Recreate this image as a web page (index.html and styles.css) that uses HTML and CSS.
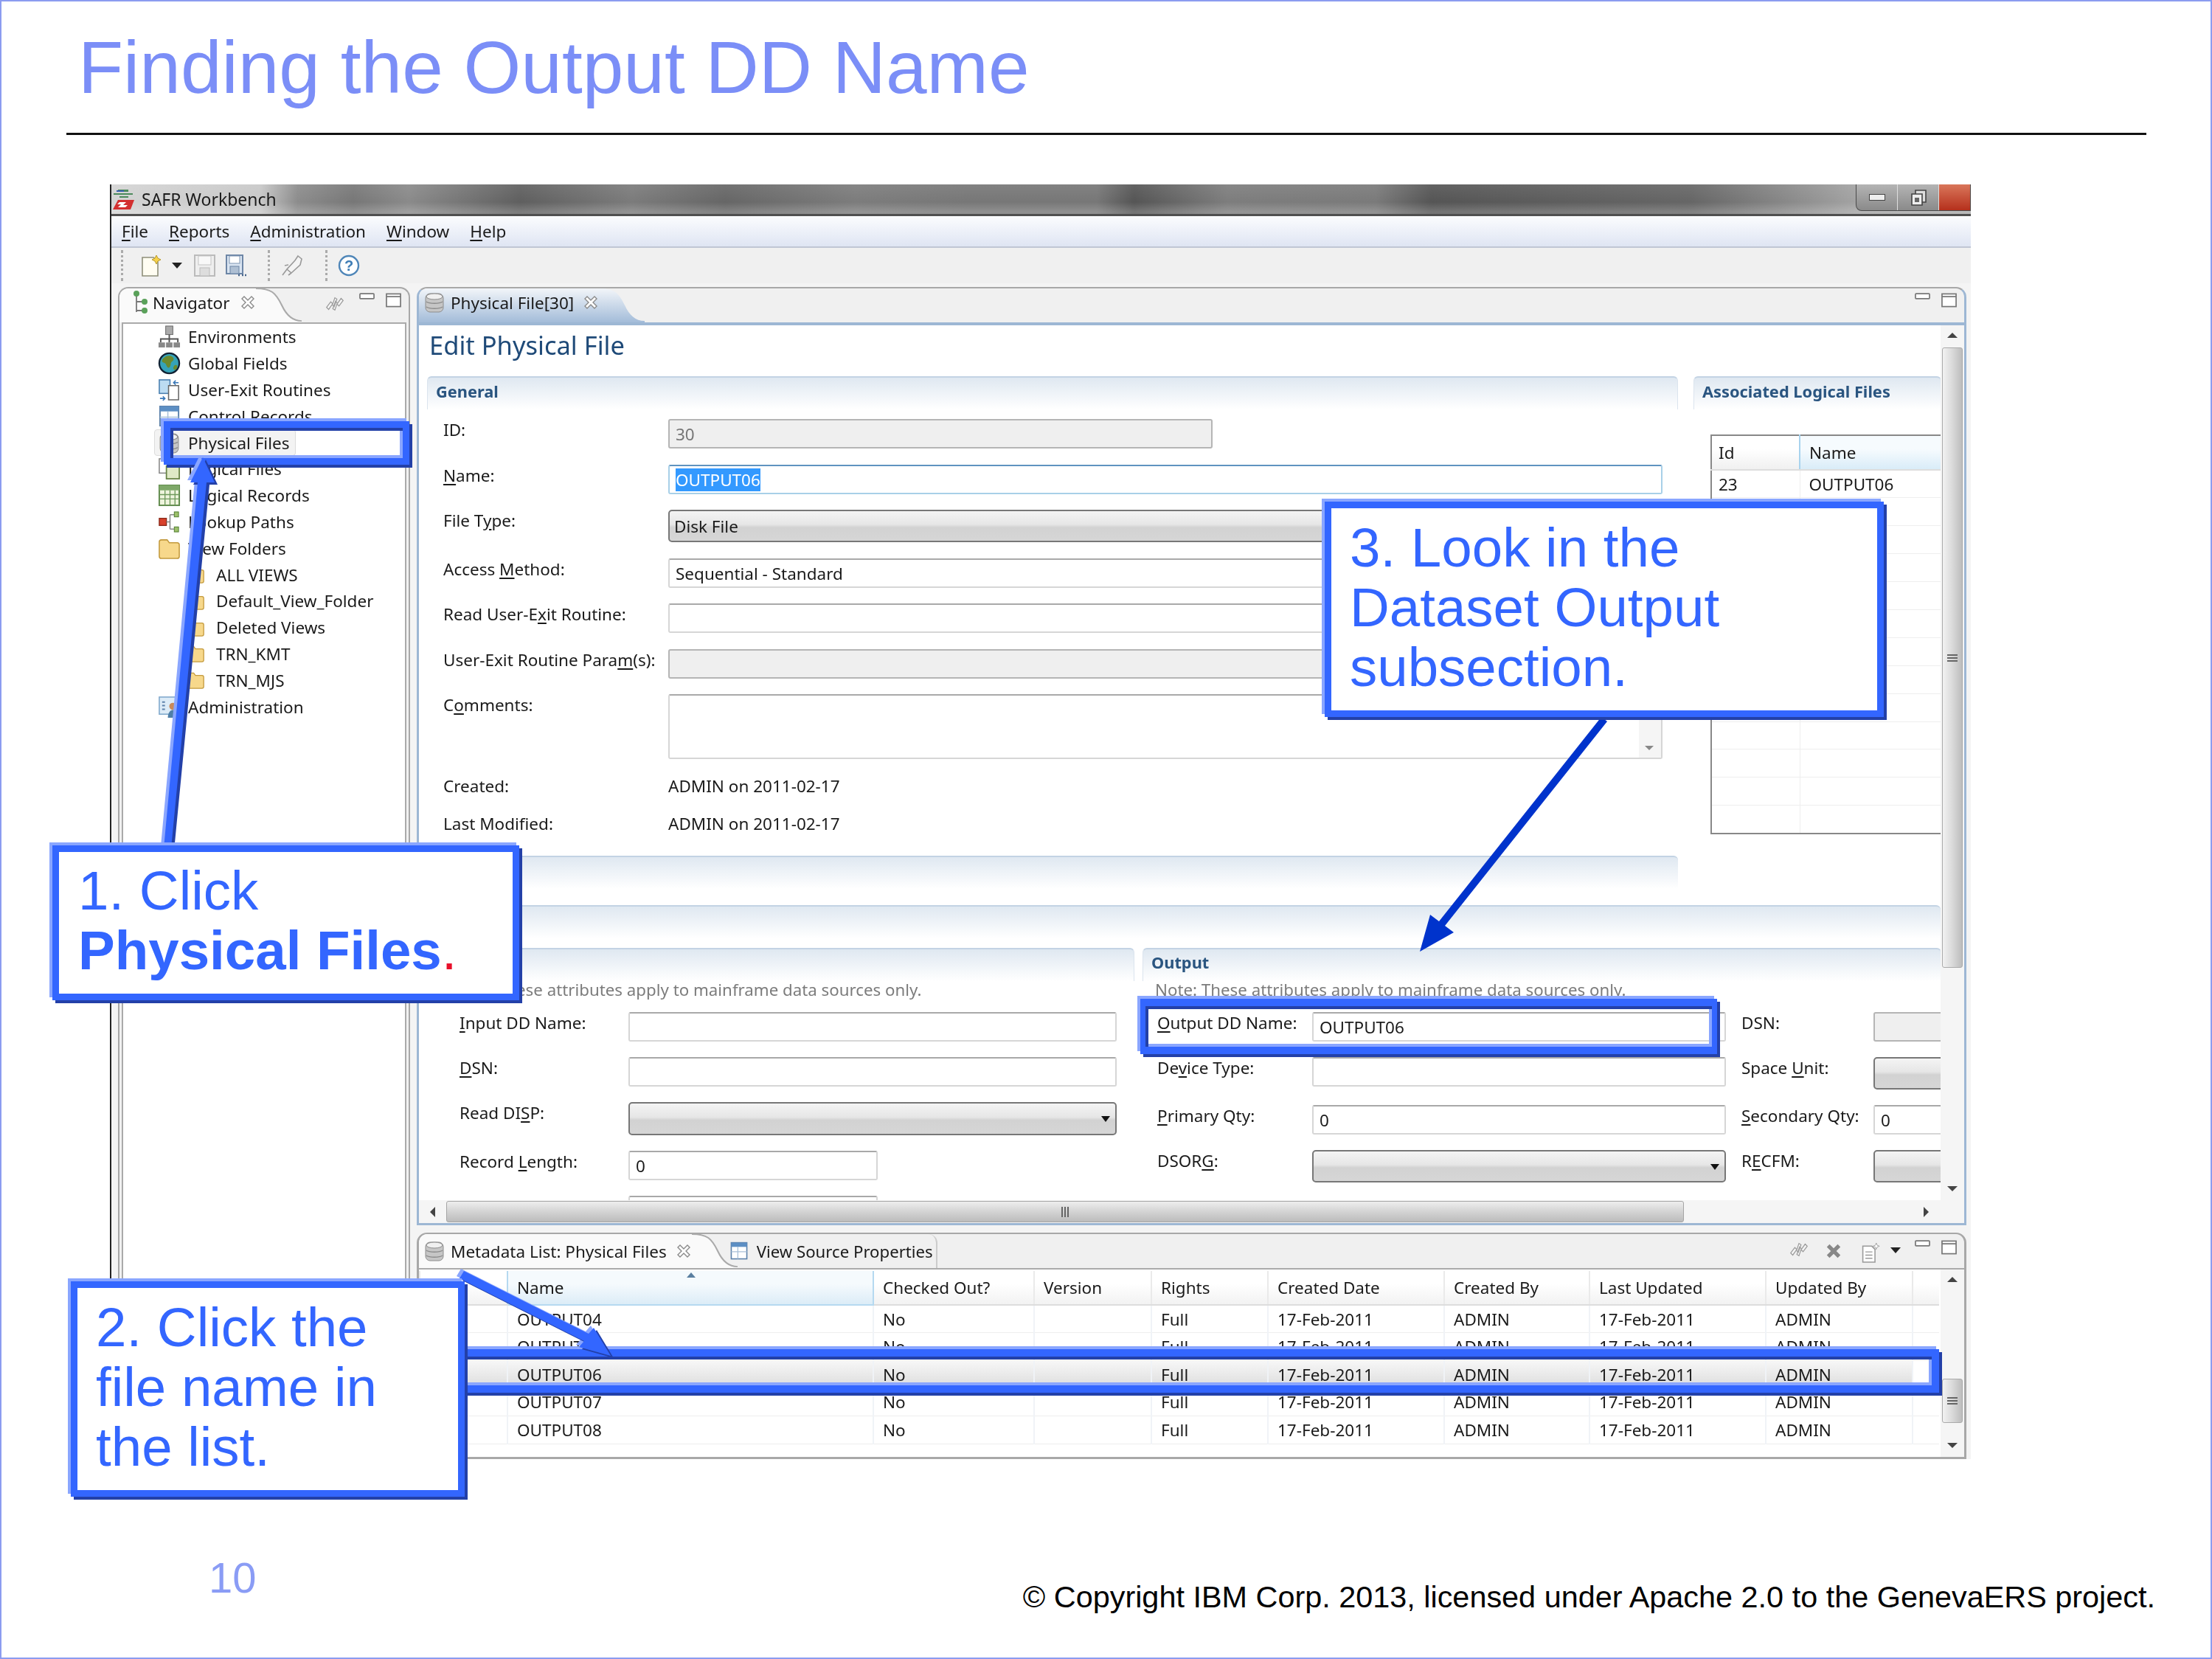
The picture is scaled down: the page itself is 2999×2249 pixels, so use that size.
FILE: index.html
```html
<!DOCTYPE html>
<html lang="en">
<head>
  <meta charset="UTF-8" />
  <title>Finding the Output DD Name</title>
  <link rel="stylesheet" href="styles.css">
</head>
<body>
<svg class="defs" aria-hidden="true">
  <defs>
    <linearGradient id="tabBlue" x1="0" y1="0" x2="0" y2="1"><stop offset="0" stop-color="#f2f5f9"/><stop offset="1" stop-color="#a3bcd9"/></linearGradient>
    <symbol id="i-db" viewBox="0 0 30 30"><rect x="3" y="3" width="24" height="25" rx="6" fill="#c6c6c6" stroke="#8c8c8c"/><ellipse cx="15" cy="7" rx="11" ry="4" fill="#f0f0f0" stroke="#8c8c8c"/><path d="M4 14c4 3 18 3 22 0M4 21c4 3 18 3 22 0" fill="none" stroke="#8c8c8c" stroke-width="1.5"/></symbol>
    <symbol id="i-x" viewBox="0 0 22 22"><path d="M3 6l3-3 5 5 5-5 3 3-5 5 5 5-3 3-5-5-5 5-3-3 5-5z" fill="#fff" stroke="#8a8a8a" stroke-width="1.4"/></symbol>
    <symbol id="i-min" viewBox="0 0 22 10"><rect x="1" y="1" width="20" height="7" rx="1" fill="#fff" stroke="#777" stroke-width="1.8"/></symbol>
    <symbol id="i-max" viewBox="0 0 22 20"><rect x="1" y="1" width="20" height="18" fill="#fff" stroke="#777" stroke-width="1.8"/><path d="M1 5h20" stroke="#777" stroke-width="1.8"/></symbol>
    <symbol id="i-sync" viewBox="0 0 30 30"><path d="M3 20l6-8 3 3 3-9 3 2-4 11-3-3-5 7zM27 10l-6 8-3-3-3 9-3-2 4-11 3 3 5-7z" fill="#f4f4f4" stroke="#999" stroke-width="1.3"/></symbol>
    <symbol id="i-env" viewBox="0 0 32 32"><rect x="11" y="1" width="10" height="12" fill="#aaa" stroke="#666"/><path d="M16 13v5M4 24v-5h24v5M16 18v6" stroke="#555" stroke-width="2" fill="none"/><rect x="1" y="24" width="9" height="7" fill="#888"/><rect x="11.5" y="24" width="9" height="7" fill="#888"/><rect x="22" y="24" width="9" height="7" fill="#888"/></symbol>
    <symbol id="i-globe" viewBox="0 0 32 32"><circle cx="16" cy="16" r="14" fill="#35a3b8" stroke="#123" stroke-width="2.4"/><path d="M9 8c5-4 11-3 13 1 1 4-4 4-4 8s-3 7-5 4-1-5-5-6-2-5 1-7zM23 19c3-2 5 0 4 3s-4 4-5 2 0-3 1-5z" fill="#6b8a2e"/></symbol>
    <symbol id="i-exit" viewBox="0 0 32 32"><rect x="2" y="2" width="15" height="19" fill="#bcdcf2" stroke="#4a7fb0" stroke-width="1.6"/><path d="M15 10h14v20H15z" fill="#fff" stroke="#666" stroke-width="1.6"/><path d="M22 6h7M25 3l-3 3 3 3M3 28h7M7 25l3 3-3 3" fill="none" stroke="#3a78b8" stroke-width="1.6"/></symbol>
    <symbol id="i-ctl" viewBox="0 0 32 32"><rect x="3" y="2" width="26" height="27" fill="#fff" stroke="#5d82ab" stroke-width="2"/><rect x="3" y="2" width="26" height="7" fill="#5d8fc4"/><path d="M14 9v20M3 17h26" stroke="#a9c0d8" stroke-width="1.6"/></symbol>
    <symbol id="i-logical" viewBox="0 0 32 32"><rect x="2" y="2" width="18" height="20" fill="#fff" stroke="#888" stroke-width="1.6"/><rect x="12" y="12" width="18" height="18" fill="#dfe9c6" stroke="#668244" stroke-width="1.8"/></symbol>
    <symbol id="i-grid" viewBox="0 0 32 32"><rect x="2" y="2" width="28" height="28" fill="#eef4dd" stroke="#5f8a4c" stroke-width="2"/><rect x="2" y="2" width="28" height="7" fill="#7ea868"/><path d="M2 15h28M2 21h28M10 9v21M17 9v21M24 9v21" stroke="#6f9a5c" stroke-width="1.4"/></symbol>
    <symbol id="i-lookup" viewBox="0 0 32 32"><rect x="2" y="11" width="10" height="10" fill="#d8412c" stroke="#8a2a1a" stroke-width="1.4"/><path d="M12 16h5M17 6v20M17 6h6M17 26h6" fill="none" stroke="#888" stroke-width="1.6"/><rect x="23" y="2" width="6" height="7" fill="#9cc06a" stroke="#4d7a2d"/><rect x="23" y="23" width="6" height="7" fill="#9cc06a" stroke="#4d7a2d"/></symbol>
    <symbol id="i-folder" viewBox="0 0 32 30"><path d="M2 6c0-2 1-3 3-3h8l3 4h11c2 0 3 1 3 3v16c0 2-1 3-3 3H5c-2 0-3-1-3-3z" fill="#f7d88b" stroke="#c39a3e" stroke-width="1.6"/></symbol>
    <symbol id="i-admin" viewBox="0 0 32 32"><rect x="2" y="2" width="24" height="24" fill="#dcebf7" stroke="#7fa8cc" stroke-width="1.6"/><path d="M6 9h4M6 14h4M6 19h4" stroke="#5d82ab" stroke-width="2"/><circle cx="21" cy="15" r="5" fill="#c98a5a"/><path d="M14 31c0-8 4-11 7-11s7 3 7 11z" fill="#4f7fa8"/></symbol>
    <symbol id="i-nav" viewBox="0 0 24 34"><path d="M6 6v24M6 16h10M6 28h10" stroke="#777" stroke-width="1.8" fill="none"/><circle cx="6" cy="5" r="4" fill="#5aa15a"/><circle cx="17" cy="16" r="4" fill="#5aa15a"/><circle cx="17" cy="28" r="4" fill="#5aa15a"/></symbol>
    <symbol id="i-doc" viewBox="0 0 30 32"><path d="M3 6h14l5 5v20H3z" fill="#fff" stroke="#999" stroke-width="1.8"/><path d="M7 15h11M7 20h11M7 25h11" stroke="#999" stroke-width="1.6"/><path d="M24 1l1.4 3.6L29 6l-3.6 1.4L24 11l-1.4-3.6L19 6l3.6-1.4z" fill="#fff" stroke="#999"/></symbol>
  </defs>
</svg>

<div class="slide">
  <h1 class="title">Finding the Output DD Name</h1>
  <div class="rule"></div>

  <div class="window">
    <div class="titlebar">
      <svg class="app-logo" viewBox="0 0 32 30"><path d="M8 2h14v3H8zM2 7h26v2H2zM10 11h12v2H10z" fill="#4c8a5c"/><path d="M6 3h10v2H6z" fill="#3a5fb0"/><path d="M8 16h22l-5 13H1z" fill="#d32f2f"/><path d="M10 19h9l-4 4h6l-3 3H8l4-4H7z" fill="#fff"/></svg>
      <span class="app-name">SAFR Workbench</span>
      <div class="win-btns">
        <div class="win-btn"><span class="win-min"></span></div>
        <div class="win-btn">
          <svg class="win-restore" viewBox="0 0 24 24"><path d="M8 2h14v16H8z" fill="#ddd" stroke="#444" stroke-width="1.6"/><path d="M3 7h14v15H3z" fill="#eee" stroke="#444" stroke-width="1.6"/><path d="M7 12h6v6H7z" fill="#666"/></svg>
        </div>
        <div class="win-btn win-close"></div>
      </div>
    </div>

    <div class="menubar">
      <span><u>F</u>ile</span>
      <span><u>R</u>eports</span>
      <span><u>A</u>dministration</span>
      <span><u>W</u>indow</span>
      <span><u>H</u>elp</span>
    </div>

    <div class="toolbar">
      <span class="tb-sep tb-first"></span>
      <svg class="tb-new" viewBox="0 0 28 30"><path d="M2 4h15l6 6v19H2z" fill="#fffdf2" stroke="#8f8f7a" stroke-width="1.6"/><path d="M21 1l2 4 4 2-4 2-2 4-2-4-4-2 4-2z" fill="#f7d24a" stroke="#b99b2c"/></svg>
      <span class="tb-drop"></span>
      <svg class="tb-save" viewBox="0 0 29 30"><rect x="1" y="1" width="27" height="28" fill="#eee" stroke="#bbb" stroke-width="2"/><rect x="6" y="2" width="17" height="12" fill="#f8f8f8" stroke="#c4c4c4"/><rect x="8" y="18" width="13" height="11" fill="#ddd" stroke="#bbb"/></svg>
      <svg class="tb-saveas" viewBox="0 0 28 30"><rect x="1" y="1" width="22" height="25" fill="#d9e4f1" stroke="#6d86a6" stroke-width="2"/><rect x="5" y="2" width="14" height="10" fill="#fff" stroke="#7c94b2"/><rect x="6" y="16" width="12" height="10" fill="#aebfd3" stroke="#6d86a6"/><path d="M17 28h2M22 28h2M26 28h2" stroke="#45638a" stroke-width="2.4"/></svg>
      <span class="tb-sep"></span>
      <svg class="tb-rocket" viewBox="0 0 32 30"><path d="M24 2l5 4-2 8-12 11-6-5L20 8zM9 20l-6 8M15 25l-4 3M6 15l5-1" fill="#f4f4f4" stroke="#999" stroke-width="1.6"/></svg>
      <span class="tb-sep"></span>
      <svg class="tb-help" viewBox="0 0 30 30"><circle cx="15" cy="15" r="13" fill="#fff" stroke="#4f86b8" stroke-width="2.4"/><text x="15" y="22" text-anchor="middle" class="help-mark">?</text></svg>
    </div>

    <div class="workspace">
      <aside class="panel nav-panel">
        <div class="panel-head">
          <div class="tab">
            <svg class="tab-icon nav-icon"><use href="#i-nav"/></svg>
            <span class="tab-label">Navigator</span>
            <svg class="tab-x"><use href="#i-x"/></svg>
          </div>
          <svg class="tab-curve" viewBox="0 0 60 48" preserveAspectRatio="none"><path d="M0 0C20 0 26 6 34 24 40 38 48 46 60 46V48H0Z" fill="#fafafa"/><path d="M0 0C20 0 26 6 34 24 40 38 48 46 60 46" fill="none" stroke="#aaa" stroke-width="2"/></svg>
          <div class="head-tools">
            <svg class="tool-sync"><use href="#i-sync"/></svg>
            <svg class="tool-min"><use href="#i-min"/></svg>
            <svg class="tool-max"><use href="#i-max"/></svg>
          </div>
        </div>
        <ul class="tree">
          <li class="tree-row"><svg class="tree-icon"><use href="#i-env"/></svg>Environments</li>
          <li class="tree-row"><svg class="tree-icon"><use href="#i-globe"/></svg>Global Fields</li>
          <li class="tree-row"><svg class="tree-icon"><use href="#i-exit"/></svg>User-Exit Routines</li>
          <li class="tree-row"><svg class="tree-icon"><use href="#i-ctl"/></svg>Control Records</li>
          <li class="tree-row tree-sel"><svg class="tree-icon"><use href="#i-db"/></svg>Physical Files</li>
          <li class="tree-row"><svg class="tree-icon"><use href="#i-logical"/></svg>Logical Files</li>
          <li class="tree-row"><svg class="tree-icon"><use href="#i-grid"/></svg>Logical Records</li>
          <li class="tree-row"><svg class="tree-icon"><use href="#i-lookup"/></svg>Lookup Paths</li>
          <li class="tree-row"><svg class="tree-icon"><use href="#i-folder"/></svg>View Folders</li>
          <li class="tree-row tree-child"><svg class="tree-icon"><use href="#i-folder"/></svg>ALL VIEWS</li>
          <li class="tree-row tree-child"><svg class="tree-icon"><use href="#i-folder"/></svg>Default_View_Folder</li>
          <li class="tree-row tree-child"><svg class="tree-icon"><use href="#i-folder"/></svg>Deleted Views</li>
          <li class="tree-row tree-child"><svg class="tree-icon"><use href="#i-folder"/></svg>TRN_KMT</li>
          <li class="tree-row tree-child"><svg class="tree-icon"><use href="#i-folder"/></svg>TRN_MJS</li>
          <li class="tree-row"><svg class="tree-icon"><use href="#i-admin"/></svg>Administration</li>
        </ul>
      </aside>

      <div class="main-col">
        <section class="panel editor">
          <div class="panel-head editor-head">
            <div class="tab tab-active">
              <svg class="tab-icon"><use href="#i-db"/></svg>
              <span class="tab-label">Physical File[30]</span>
              <svg class="tab-x"><use href="#i-x"/></svg>
            </div>
            <svg class="tab-curve" viewBox="0 0 60 48" preserveAspectRatio="none"><path d="M0 0C20 0 26 6 34 24 40 38 48 46 60 46V48H0Z" fill="url(#tabBlue)"/></svg>
            <div class="head-tools">
              <svg class="tool-min"><use href="#i-min"/></svg>
              <svg class="tool-max"><use href="#i-max"/></svg>
            </div>
          </div>

          <div class="editor-body">
            <div class="editor-view">
              <div class="scroll-area">
                <h2 class="form-title">Edit Physical File</h2>

                <div class="upper">
                  <div class="section">
                    <div class="section-head">General</div>
                    <div class="form general-form">
                      <label class="form-label">ID:</label><div class="field field-off field-grey field-id">30</div>
                      <label class="form-label"><u>N</u>ame:</label><div class="field field-focus"><span class="selected">OUTPUT06</span></div>
                      <label class="form-label">File T<u>y</u>pe:</label><div class="combo">Disk File</div>
                      <label class="form-label">Access <u>M</u>ethod:</label><div class="field">Sequential - Standard</div>
                      <label class="form-label">Read User-E<u>x</u>it Routine:</label><div class="field"></div>
                      <label class="form-label">User-Exit Routine Para<u>m</u>(s):</label><div class="field field-off"></div>
                      <label class="form-label">C<u>o</u>mments:</label><div class="field field-tall"><span class="mini-scroll"></span></div>
                      <label class="form-label">Created:</label><div class="form-value">ADMIN on 2011-02-17</div>
                      <label class="form-label">Last Modified:</label><div class="form-value">ADMIN on 2011-02-17</div>
                    </div>
                  </div>
                  <div class="section">
                    <div class="section-head">Associated Logical Files</div>
                    <table class="assoc">
                      <tr><th>Id</th><th class="assoc-name">Name</th></tr>
                      <tr><td>23</td><td>OUTPUT06</td></tr>
                      <tr><td></td><td></td></tr><tr><td></td><td></td></tr><tr><td></td><td></td></tr>
                      <tr><td></td><td></td></tr><tr><td></td><td></td></tr><tr><td></td><td></td></tr>
                      <tr><td></td><td></td></tr><tr><td></td><td></td></tr><tr><td></td><td></td></tr>
                      <tr><td></td><td></td></tr><tr><td></td><td></td></tr><tr><td></td><td></td></tr>
                    </table>
                  </div>
                </div>

                <div class="bar bar-short"></div>
                <div class="bar bar-long"></div>

                <div class="lower">
                  <div class="section">
                    <div class="section-head section-low">Input</div>
                    <p class="note note-input">Note: These attributes apply to mainframe data sources only.</p>
                    <div class="form input-form">
                      <label class="form-label"><u>I</u>nput DD Name:</label><div class="field"></div>
                      <label class="form-label"><u>D</u>SN:</label><div class="field"></div>
                      <label class="form-label">Read DI<u>S</u>P:</label><div class="combo combo-arrow"></div>
                      <label class="form-label">Record <u>L</u>ength:</label><div class="field field-short">0</div>
                      <label class="form-label"></label><div class="field field-short"></div>
                    </div>
                  </div>
                  <div class="section">
                    <div class="section-head section-low">Output</div>
                    <p class="note note-output">Note: These attributes apply to mainframe data sources only.</p>
                    <div class="form output-form">
                      <label class="form-label"><u>O</u>utput DD Name:</label><div class="field">OUTPUT06</div>
                      <label class="form-label form-label-third">DSN:</label><div class="field field-off"></div>
                      <label class="form-label">De<u>v</u>ice Type:</label><div class="field"></div>
                      <label class="form-label form-label-third">Space <u>U</u>nit:</label><div class="combo"></div>
                      <label class="form-label"><u>P</u>rimary Qty:</label><div class="field">0</div>
                      <label class="form-label form-label-third"><u>S</u>econdary Qty:</label><div class="field">0</div>
                      <label class="form-label">DSOR<u>G</u>:</label><div class="combo combo-arrow"></div>
                      <label class="form-label form-label-third">R<u>E</u>CFM:</label><div class="combo"></div>
                    </div>
                  </div>
                </div>
              </div>

              <div class="vscroll">
                <span class="arrow-up"></span>
                <div class="vthumb"><span class="grip-h"></span></div>
                <span class="arrow-down"></span>
              </div>
            </div>

            <div class="hscroll">
              <span class="arrow-left"></span>
              <div class="hthumb"><span class="grip-v"></span></div>
              <span class="arrow-right"></span>
            </div>
          </div>
        </section>

        <section class="panel meta">
          <div class="panel-head meta-head">
            <div class="tab">
              <svg class="tab-icon"><use href="#i-db"/></svg>
              <span class="tab-label">Metadata List: Physical Files</span>
              <svg class="tab-x"><use href="#i-x"/></svg>
            </div>
            <svg class="tab-curve" viewBox="0 0 60 48" preserveAspectRatio="none"><path d="M0 0C20 0 26 6 34 24 40 38 48 46 60 46V48H0Z" fill="#fafafa"/><path d="M0 0C20 0 26 6 34 24 40 38 48 46 60 46" fill="none" stroke="#aaa" stroke-width="2"/></svg>
            <div class="tab tab-second">
              <svg class="tab-icon tab-icon-ctl"><use href="#i-ctl"/></svg>
              <span class="tab-label">View Source Properties</span>
            </div>
            <div class="head-tools">
              <svg class="tool-sync"><use href="#i-sync"/></svg>
              <svg class="tool-del" viewBox="0 0 26 26"><path d="M3 7l4-4 6 6 6-6 4 4-6 6 6 6-4 4-6-6-6 6-4-4 6-6z" fill="#888"/></svg>
              <svg class="tool-doc"><use href="#i-doc"/></svg>
              <span class="tool-drop"></span>
              <svg class="tool-min"><use href="#i-min"/></svg>
              <svg class="tool-max"><use href="#i-max"/></svg>
            </div>
          </div>

          <div class="meta-body">
            <table class="list">
              <colgroup><col><col><col><col><col><col><col><col><col><col></colgroup>
              <thead>
                <tr><th></th><th class="sorted">Name<span class="sort-mark"></span></th><th>Checked Out?</th><th>Version</th><th>Rights</th><th>Created Date</th><th>Created By</th><th>Last Updated</th><th>Updated By</th><th></th></tr>
              </thead>
              <tbody>
                <tr><td></td><td>OUTPUT04</td><td>No</td><td></td><td>Full</td><td>17-Feb-2011</td><td>ADMIN</td><td>17-Feb-2011</td><td>ADMIN</td><td></td></tr>
                <tr><td></td><td>OUTPUT05</td><td>No</td><td></td><td>Full</td><td>17-Feb-2011</td><td>ADMIN</td><td>17-Feb-2011</td><td>ADMIN</td><td></td></tr>
                <tr class="row-sel"><td></td><td>OUTPUT06</td><td>No</td><td></td><td>Full</td><td>17-Feb-2011</td><td>ADMIN</td><td>17-Feb-2011</td><td>ADMIN</td><td class="row-gap"></td></tr>
                <tr><td></td><td>OUTPUT07</td><td>No</td><td></td><td>Full</td><td>17-Feb-2011</td><td>ADMIN</td><td>17-Feb-2011</td><td>ADMIN</td><td></td></tr>
                <tr><td></td><td>OUTPUT08</td><td>No</td><td></td><td>Full</td><td>17-Feb-2011</td><td>ADMIN</td><td>17-Feb-2011</td><td>ADMIN</td><td></td></tr>
              </tbody>
            </table>
            <div class="vscroll list-scroll">
              <span class="arrow-up"></span>
              <div class="list-thumb"><span class="grip-h"></span></div>
              <span class="arrow-down"></span>
            </div>
          </div>
        </section>
      </div>
    </div>
  </div>

  <footer class="footer">
    <span class="page-num">10</span>
    <span class="copyright">© Copyright IBM Corp. 2013, licensed under Apache 2.0 to the GenevaERS project.</span>
  </footer>

  <!-- annotations over the screenshot -->
  <div class="mark mark-tree"></div>
  <div class="mark mark-output"></div>
  <div class="mark mark-row"></div>

  <svg class="arrows" viewBox="0 0 2999 2249">
    <g transform="translate(-4 -3)" fill="#8aa6ff">
      <path d="M275 620L291 654H280L232 1150H222L268 654H258Z"/>
      <path d="M629 1723L798 1808 805 1800 828 1838 785 1826 792 1818 623 1733Z"/>
    </g>
    <g transform="translate(4 3)" fill="#2340a8">
      <path d="M275 620L291 654H280L232 1150H222L268 654H258Z"/>
      <path d="M629 1723L798 1808 805 1800 828 1838 785 1826 792 1818 623 1733Z"/>
    </g>
    <g fill="#3366ff">
      <path d="M275 620L291 654H280L232 1150H222L268 654H258Z"/>
      <path d="M629 1723L798 1808 805 1800 828 1838 785 1826 792 1818 623 1733Z"/>
    </g>
    <path d="M2171 972L2179 978 1959 1255 1971 1264 1925 1290 1939 1240 1951 1249Z" fill="#0033cc"/>
  </svg>

  <div class="callout callout-one">1. Click<br><b>Physical Files</b><span class="red-dot">.</span></div>
  <div class="callout callout-two">2. Click the<br>file name in<br>the list.</div>
  <div class="callout callout-three">3. Look in the<br>Dataset Output<br>subsection.</div>
</div>
</body>
</html>
```

FILE: styles.css
```css
* {
  box-sizing: border-box;
}

body {
  margin: 0;
  background: #fff;
}

.defs {
  position: absolute;
  width: 0;
  height: 0;
}

.slide {
  position: relative;
  width: 2999px;
  height: 2249px;
  overflow: hidden;
  background: #fff;
  box-shadow: inset 0 0 0 2px #8c9cf0;
  font-family: "Liberation Sans", Arial, sans-serif;
}

.title {
  margin: 34px 0 0 106px;
  font-size: 100px;
  font-weight: normal;
  line-height: 115px;
  color: #7b8ef7;
}

.rule {
  width: 2820px;
  height: 3px;
  margin: 31px 0 0 90px;
  background: #111;
}

/* screenshot of the workbench */
.window {
  width: 2523px;
  height: 1728px;
  margin: 67px 0 0 149px;
  display: flex;
  flex-direction: column;
  background: #f4f4f4;
  border-left: 2px solid #222;
  font-family: "Noto Sans", sans-serif;
  font-size: 22.5px;
  color: #1a1a1a;
  filter: blur(0.5px);
}

.titlebar {
  height: 43px;
  flex: none;
  display: flex;
  align-items: center;
  padding-left: 1px;
  background:
    linear-gradient(rgba(255, 255, 255, 0.08), rgba(255, 255, 255, 0) 60%, rgba(255, 255, 255, 0.18) 92%),
    linear-gradient(90deg, #d4d4d4 0, #c8c8c8 8%, #8c8c8c 10%, #777 13%, #8a8a8a 16%, #5f5f5f 22%, #7b7b7b 28%, #666 33%, #7c7c7c 40%, #777 46%, #777 53%, #555 55%, #7d7d7d 60%, #7a7a7a 68%, #555 71%, #5e5e5e 78%, #666 85%, #888 90%, #a4a4a4 94%, #aaa 100%);
  border-bottom: 3px solid #4f4f4f;
}

.app-logo {
  width: 32px;
  height: 30px;
}

.app-name {
  margin-left: 8px;
  font-size: 23px;
}

.win-btns {
  margin-left: auto;
  display: flex;
  height: 36px;
  align-self: flex-start;
  border: 1px solid #4a4a4a;
  border-top: none;
  border-radius: 0 0 0 8px;
  background: linear-gradient(#b4b4b4, #8a8a8a);
}

.win-btn {
  width: 56px;
  display: flex;
  align-items: center;
  justify-content: center;
  border-right: 1px solid #ddd;
}

.win-min {
  width: 22px;
  height: 9px;
  background: #eee;
  border: 1px solid #444;
}

.win-restore {
  width: 24px;
  height: 24px;
}

.win-close {
  width: 42px;
  border-right: none;
  background: linear-gradient(#d9765a, #b5301c);
}

.menubar {
  height: 43px;
  flex: none;
  display: flex;
  align-items: center;
  gap: 28px;
  padding-left: 14px;
  background: linear-gradient(#fbfcfe, #dfe5f3);
  border-bottom: 2px solid #c0c6d4;
}

.toolbar {
  height: 48px;
  flex: none;
  display: flex;
  align-items: center;
  gap: 14px;
  padding-left: 13px;
  background: #f0f0f0;
}

.tb-sep {
  width: 3px;
  height: 42px;
  margin-left: 15px;
  border-left: 3px dotted #aaa;
}

.tb-first {
  margin-left: 0;
}

.tb-new {
  width: 28px;
  height: 30px;
  margin-left: 10px;
}

.tb-drop,
.tool-drop {
  width: 0;
  height: 0;
  border-left: 7px solid transparent;
  border-right: 7px solid transparent;
  border-top: 8px solid #222;
}

.tb-save {
  width: 29px;
  height: 30px;
  margin-left: 2px;
}

.tb-saveas {
  width: 28px;
  height: 30px;
}

.tb-rocket {
  width: 32px;
  height: 30px;
}

.tb-help {
  width: 30px;
  height: 30px;
}

.help-mark {
  font-family: "Liberation Sans", sans-serif;
  font-size: 20px;
  font-weight: bold;
  fill: #3f7db5;
}

.workspace {
  flex: 1;
  display: flex;
  gap: 9px;
  padding: 5px 6px 0 9px;
  min-height: 0;
}

.panel {
  border: 2px solid #a8a8a8;
  border-bottom-width: 3px;
  border-radius: 14px 14px 0 0;
  background: #f0f0f0;
  display: flex;
  flex-direction: column;
  overflow: hidden;
}

.panel-head {
  height: 46px;
  display: flex;
  align-items: stretch;
  flex: none;
}

.tab {
  display: flex;
  align-items: center;
  background: #fafafa;
  padding-left: 9px;
}

.tab-label {
  white-space: nowrap;
}

.tab-icon {
  width: 30px;
  height: 30px;
}

.nav-icon {
  width: 24px;
  height: 34px;
}

.tab-x {
  width: 22px;
  height: 22px;
  margin-left: 12px;
}

.tab-curve {
  width: 62px;
  flex: none;
}

.head-tools {
  margin-left: auto;
  display: flex;
  align-items: flex-start;
  padding: 6px 10px 0 0;
}

.tool-min {
  width: 21px;
  height: 10px;
}

.tool-max {
  width: 21px;
  height: 20px;
  margin-left: 15px;
}

.tool-sync {
  width: 28px;
  height: 30px;
  margin-right: 19px;
}

/* navigator */
.nav-panel {
  width: 396px;
  flex: none;
  border-bottom: none;
}

.nav-panel .tab {
  padding: 0 0 8px 32px;
  background: #fafafa;
}

.nav-panel .nav-icon {
  margin-left: -15px;
}

.nav-panel .tab-label {
  margin-left: 4px;
}

.nav-panel .tab-x {
  margin-left: 14px;
}

.tree {
  flex: 1;
  margin: 0 3px;
  padding: 0;
  list-style: none;
  background: #fff;
  border: 2px solid #aaa;
  border-bottom: none;
}

.tree-row {
  height: 35.8px;
  display: flex;
  align-items: center;
  padding-left: 47px;
  white-space: nowrap;
}

.tree-icon {
  width: 31px;
  height: 31px;
  margin-right: 10px;
  flex: none;
}

.tree-child {
  padding-left: 85px;
}

.tree-child .tree-icon {
  width: 26px;
  height: 24px;
  margin-right: 15px;
}

.tree-sel {
  width: 192px;
  margin-left: 42px;
  padding-left: 4px;
  background: #f3f3f3;
  border: 1px solid #dcdcdc;
  border-radius: 4px;
}

/* editor */
.main-col {
  flex: 1;
  display: flex;
  flex-direction: column;
  gap: 10px;
  min-width: 0;
}

.editor {
  height: 1272px;
  border-color: #a8a8a8 #9db7d4 #9db7d4;
  border-width: 2px 3px 3px;
  flex: none;
}

.editor-head {
  border-bottom: 4px solid #9db7d4;
  height: 50px;
}

.tab-active {
  background: linear-gradient(#f2f5f9, #a3bcd9);
  padding: 0 0 8px 6px;
}

.tab-active .tab-label {
  margin-left: 7px;
}

.editor-body {
  flex: 1;
  min-height: 0;
  display: flex;
  flex-direction: column;
  background: #fff;
}

.editor-view {
  flex: 1;
  min-height: 0;
  display: flex;
}

.scroll-area {
  flex: 1;
  min-width: 0;
  overflow: hidden;
  padding-left: 11px;
}

.form-title {
  margin: 7px 0 22px 3px;
  font-size: 34.5px;
  font-weight: normal;
  line-height: 40px;
  color: #1f4a78;
}

.upper {
  display: grid;
  grid-template-columns: 1696px 336px;
  column-gap: 21px;
  height: 650px;
}

.section {
  min-width: 0;
  overflow: hidden;
}

.section-head {
  height: 45px;
  padding: 4px 0 0 11px;
  font-size: 21.8px;
  font-weight: bold;
  color: #2a5580;
  background: linear-gradient(#dfe8f1, #fff);
  border-top: 2px solid #c3d3e4;
  border-left: 1px solid #dbe4ee;
  border-right: 1px solid #dbe4ee;
  border-radius: 6px 6px 0 0;
  white-space: nowrap;
}

.form {
  display: grid;
  row-gap: 21px;
  align-items: start;
}

.general-form {
  grid-template-columns: 305px 1348px;
  padding: 13px 0 0 22px;
  row-gap: 21.5px;
}

.form-label {
  line-height: 30px;
  white-space: nowrap;
}

.form-label u,
.menubar u {
  text-underline-offset: 3px;
}

.form-value {
  line-height: 30px;
}

.field {
  height: 40px;
  padding-left: 8px;
  line-height: 38px;
  background: #fff;
  border: 2px solid #d6d6d6;
  border-top-color: #a9a9a9;
  border-radius: 3px;
  white-space: nowrap;
  position: relative;
  overflow: hidden;
}

.field-off {
  background: #efefef;
  border-color: #b5b5b5;
}

.field-grey {
  color: #777;
}

.field-id {
  width: 738px;
}

.field-focus {
  border-color: #a8d0e8;
  border-top-color: #5f93c0;
}

.selected {
  background: #3399ff;
  color: #fff;
}

.field-tall {
  height: 88px;
}

.mini-scroll {
  position: absolute;
  top: 0;
  right: 0;
  bottom: 0;
  width: 30px;
  background: #f5f5f5;
}

.mini-scroll::after {
  content: "";
  position: absolute;
  right: 10px;
  bottom: 10px;
  border-left: 6px solid transparent;
  border-right: 6px solid transparent;
  border-top: 6px solid #888;
}

.combo {
  height: 44px;
  padding-left: 6px;
  line-height: 42px;
  background: linear-gradient(#f4f4f4 0, #e6e6e6 45%, #d2d2d2 55%, #d6d6d6 100%);
  border: 2px solid #777;
  border-radius: 5px;
  position: relative;
  white-space: nowrap;
}

.combo-arrow::after {
  content: "";
  position: absolute;
  right: 7px;
  top: 17px;
  border-left: 6px solid transparent;
  border-right: 6px solid transparent;
  border-top: 8px solid #111;
}

.assoc {
  width: 313px;
  margin: 34px 0 0 23px;
  border-collapse: collapse;
  border: 2px solid #888;
  border-right: none;
  table-layout: fixed;
}

.assoc th {
  height: 47px;
  padding: 0 0 0 9px;
  font-weight: normal;
  text-align: left;
  background: linear-gradient(#fff 40%, #f0f0f0);
  border-bottom: 2px solid #ddd;
}

.assoc th:first-child {
  width: 120px;
}

.assoc .assoc-name {
  padding-left: 12px;
  background: linear-gradient(#f6fbfe 40%, #d9ecf8);
  border-left: 2px solid #a8d3ee;
}

.assoc td {
  height: 37.9px;
  padding: 0 0 0 9px;
  border-bottom: 1px solid #eee;
}

.assoc td + td {
  padding-left: 12px;
  border-left: 1px solid #eee;
}

.bar {
  height: 45px;
  background: linear-gradient(#dfe8f1, #fff);
  border-top: 2px solid #c3d3e4;
  border-radius: 6px 6px 0 0;
}

.bar-short {
  width: 1696px;
  margin-bottom: 22px;
}

.bar-long {
  margin-bottom: 13px;
}

.lower {
  display: grid;
  grid-template-columns: 959px 1083px;
  column-gap: 11px;
}

.section-low {
  padding-top: 3px;
}

.note {
  margin: 0;
  height: 42px;
  line-height: 24px;
  font-size: 22.3px;
  color: #7c7c7c;
  white-space: nowrap;
}

.note-input {
  padding-left: 32px;
}

.note-output {
  padding-left: 17px;
}

.input-form {
  grid-template-columns: 229px 662px;
  padding-left: 44px;
}

.input-form .combo {
  height: 45px;
}

.field-short {
  width: 338px;
}

.output-form {
  grid-template-columns: 210px 561px 200px 140px;
  padding-left: 20px;
}

.form-label-third {
  padding-left: 21px;
}

/* scrollbars */
.vscroll {
  width: 32px;
  flex: none;
  display: flex;
  flex-direction: column;
  align-items: center;
  background: #f5f5f5;
}

.arrow-up,
.arrow-down {
  width: 0;
  height: 0;
  flex: none;
  border-left: 7px solid transparent;
  border-right: 7px solid transparent;
}

.arrow-up {
  margin: 10px 0 13px;
  border-bottom: 7px solid #444;
}

.arrow-down {
  margin: auto 0 12px;
  border-top: 7px solid #444;
}

.vthumb {
  width: 28px;
  height: 841px;
  display: flex;
  align-items: center;
  justify-content: center;
  background: linear-gradient(90deg, #f2f2f2, #dcdcdc 45%, #bdbdbd);
  border: 1px solid #aaa;
  border-radius: 3px;
}

.grip-h {
  width: 14px;
  height: 10px;
  border-top: 2px solid #666;
  border-bottom: 2px solid #666;
  position: relative;
}

.grip-h::after {
  content: "";
  position: absolute;
  left: 0;
  right: 0;
  top: 2px;
  height: 2px;
  background: #666;
}

.hscroll {
  height: 31px;
  flex: none;
  display: flex;
  align-items: center;
  background: #f5f5f5;
  position: relative;
}

.arrow-left,
.arrow-right {
  width: 0;
  height: 0;
  flex: none;
  border-top: 7px solid transparent;
  border-bottom: 7px solid transparent;
}

.arrow-left {
  margin: 0 15px 0 15px;
  border-right: 7px solid #444;
}

.arrow-right {
  position: absolute;
  right: 48px;
  border-left: 7px solid #444;
}

.hthumb {
  width: 1678px;
  height: 29px;
  display: flex;
  align-items: center;
  justify-content: center;
  background: linear-gradient(#eee, #d6d6d6 45%, #bcbcbc);
  border: 1px solid #a5a5a5;
  border-radius: 3px;
}

.grip-v {
  width: 10px;
  height: 14px;
  background: repeating-linear-gradient(90deg, #666 0 2px, transparent 2px 4px);
}

/* metadata list */
.meta {
  flex: 1;
  min-height: 0;
  border-width: 2px 3px 3px;
}

.meta-head {
  border-bottom: 2px solid #ababab;
  height: 48px;
}

.meta-head .tab-label {
  margin-left: 7px;
}

.meta-head .tab {
  padding-left: 6px;
}

.meta-head .tab-second {
  background: none;
  padding-left: 0;
  margin-left: -7px;
  border-right: 2px solid #ccc;
  border-radius: 0 12px 0 0;
  padding-right: 4px;
}

.tab-icon-ctl {
  width: 26px;
  margin-left: -4px;
}

.meta-head .tab-second .tab-label {
  margin-left: 11px;
  font-size: 22.2px;
}

.meta-head .head-tools {
  padding-top: 8px;
}

.meta-head .tool-sync {
  margin: -2px 0 0;
}

.tool-del {
  width: 24px;
  height: 24px;
  margin: 3px 0 0 21px;
}

.tool-doc {
  width: 26px;
  height: 30px;
  margin: 2px 0 0 25px;
}

.tool-drop {
  margin: 10px 0 0 14px;
}

.meta-head .tool-min {
  margin-left: 19px;
}

.meta-body {
  flex: 1;
  min-height: 0;
  display: flex;
  background: #fff;
}

.list {
  width: 2060px;
  table-layout: fixed;
  border-collapse: collapse;
  flex: none;
  align-self: flex-start;
  margin-top: 2px;
}

.list col:nth-child(1) { width: 119px; }
.list col:nth-child(2) { width: 496px; }
.list col:nth-child(3) { width: 218px; }
.list col:nth-child(4) { width: 159px; }
.list col:nth-child(5) { width: 158px; }
.list col:nth-child(6) { width: 239px; }
.list col:nth-child(7) { width: 197px; }
.list col:nth-child(8) { width: 239px; }
.list col:nth-child(9) { width: 199px; }
.list col:nth-child(10) { width: 36px; }

.list th {
  height: 46px;
  padding: 0 0 0 12px;
  font-weight: normal;
  text-align: left;
  white-space: nowrap;
  background: linear-gradient(#fff 40%, #f2f2f2);
  border-bottom: 2px solid #ddd;
  border-left: 2px solid #eaeaea;
}

.list .sorted {
  position: relative;
  background: linear-gradient(#f5fafd 40%, #dcecf7);
  border-bottom-color: #b5d9f0;
  border-left-color: #b5d9f0;
  border-right: 2px solid #b5d9f0;
}

.sort-mark {
  position: absolute;
  left: 242px;
  top: 2px;
  border-left: 6px solid transparent;
  border-right: 6px solid transparent;
  border-bottom: 7px solid #5a7fa0;
}

.list td {
  height: 37.7px;
  padding: 0 0 0 12px;
  white-space: nowrap;
  border-bottom: 1px solid #eee;
  border-left: 2px solid #f0f3f7;
}

.list tr.row-sel td {
  background: linear-gradient(#f7f7f7, #dcdcdc);
}

.list tr.row-sel td.row-gap {
  background: #fff;
}

.list-scroll {
  margin-left: 2px;
}

.list-thumb {
  width: 28px;
  height: 60px;
  margin-top: 118px;
  display: flex;
  align-items: center;
  justify-content: center;
  background: linear-gradient(90deg, #f2f2f2, #dcdcdc 45%, #bdbdbd);
  border: 1px solid #aaa;
  border-radius: 3px;
}

/* footer */
.footer {
  display: flex;
  justify-content: space-between;
  padding: 126px 77px 0 283px;
}

.page-num {
  font-size: 58px;
  line-height: 70px;
  color: #8a9cf5;
}

.copyright {
  margin-top: 36px;
  font-size: 41.4px;
  line-height: 50px;
  color: #000;
}

/* annotations */
.mark {
  position: absolute;
  border: 9px solid #3366ff;
  box-shadow: -4px -4px 0 #8aa6ff, 4px 4px 0 #2340a8, inset 4px 4px 0 #2340a8, inset -4px -4px 0 #8aa6ff;
}

.mark-tree {
  left: 222px;
  top: 571px;
  width: 333px;
  height: 59px;
}

.mark-output {
  left: 1546px;
  top: 1354px;
  width: 782px;
  height: 75px;
  border-width: 10px 7px;
}

.mark-row {
  left: 600px;
  top: 1829px;
  width: 2029px;
  height: 59px;
  border-width: 10px;
}

.arrows {
  position: absolute;
  left: 0;
  top: 0;
  width: 2999px;
  height: 2249px;
  pointer-events: none;
}

.callout {
  position: absolute;
  background: #fff;
  border: 9px solid #3366ff;
  box-shadow: -4px -4px 0 #8aa6ff, 4px 4px 0 #2340a8;
  font-size: 74.5px;
  line-height: 81px;
  color: #3366ff;
  white-space: nowrap;
}

.callout-one {
  left: 71px;
  top: 1146px;
  width: 633px;
  height: 210px;
  padding: 12px 0 0 26px;
}

.callout-two {
  left: 96px;
  top: 1737px;
  width: 534px;
  height: 292px;
  padding: 13px 0 0 25px;
}

.callout-three {
  left: 1796px;
  top: 680px;
  width: 758px;
  height: 292px;
  padding: 13px 0 0 25px;
}

.red-dot {
  color: #e8102a;
}
```
